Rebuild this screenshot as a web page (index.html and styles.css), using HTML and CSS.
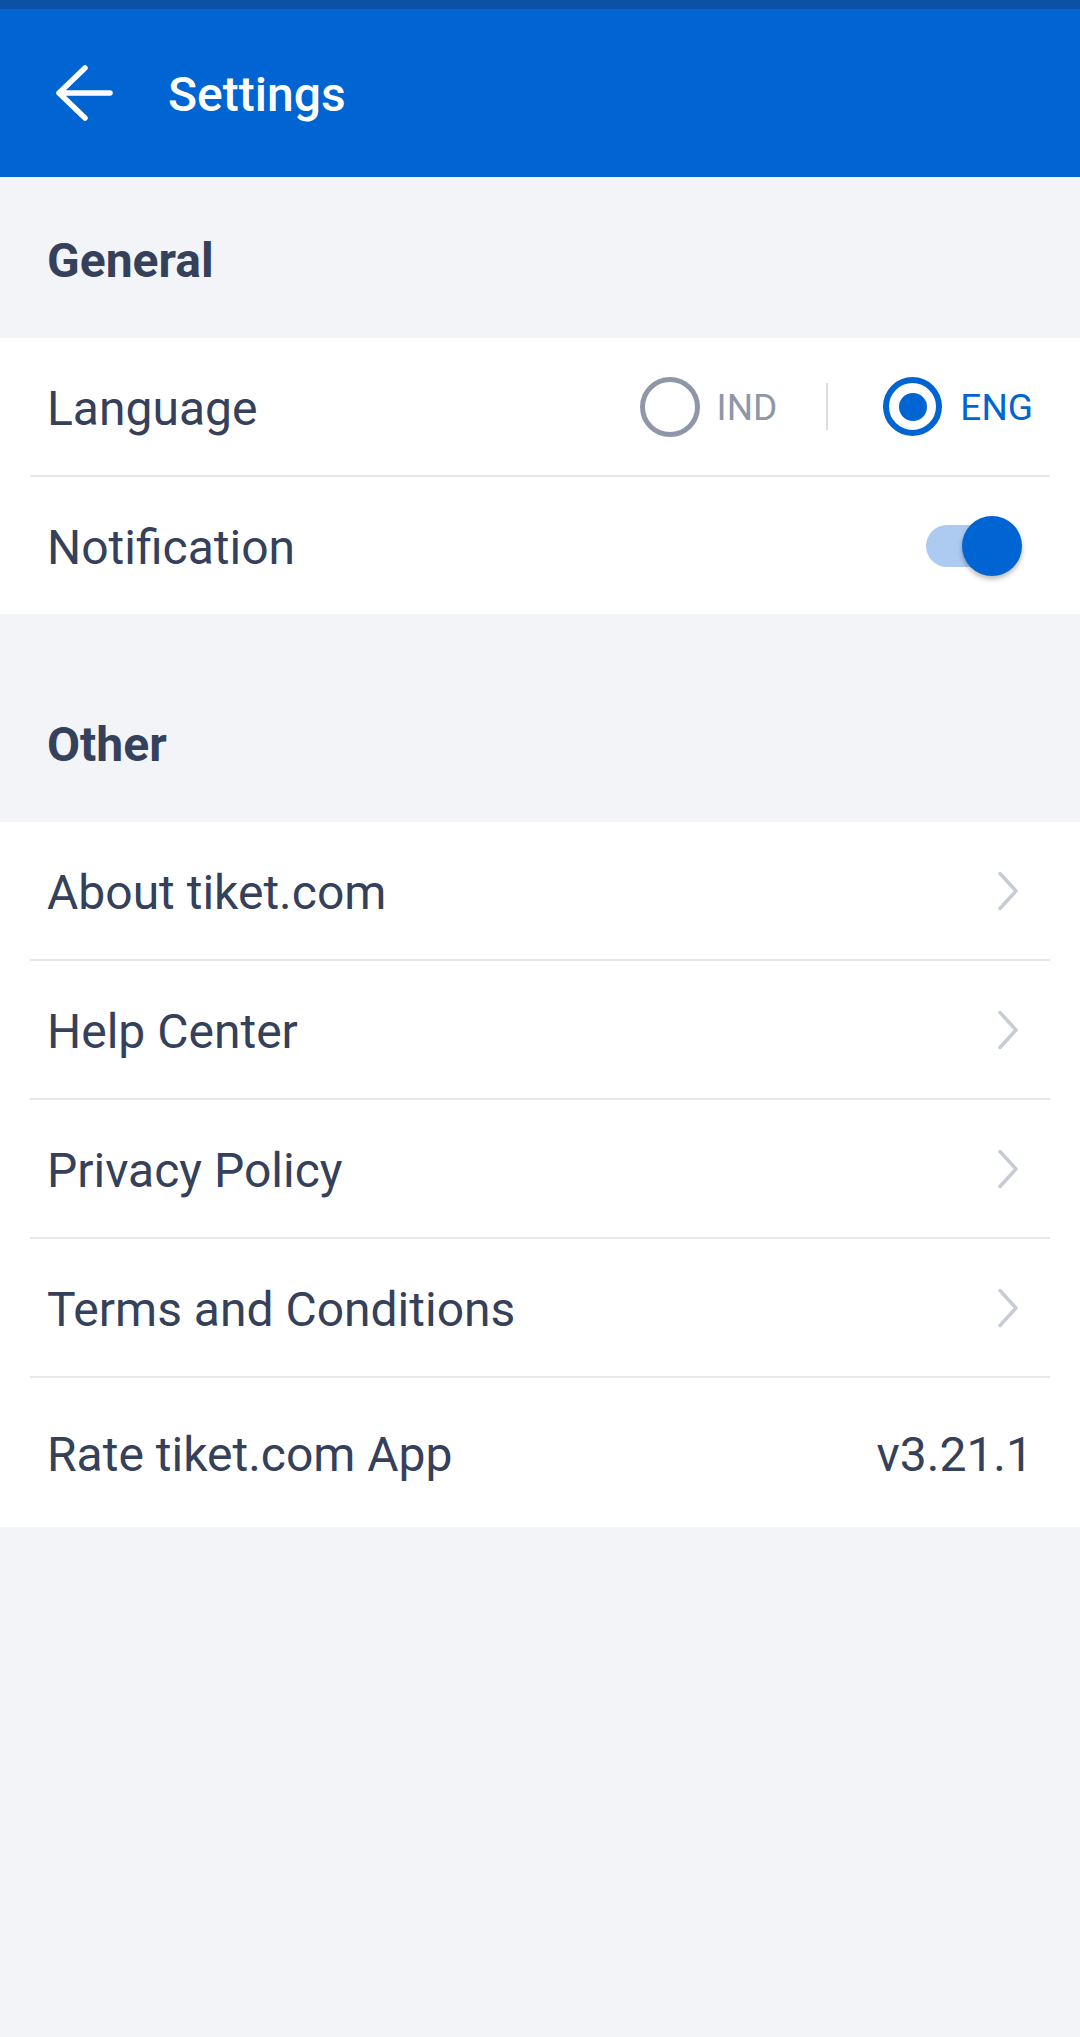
FILE: index.html
```html
<!DOCTYPE html>
<html lang="en">
<head>
<meta charset="utf-8">
<title>Settings</title>
<link rel="stylesheet" href="styles.css">
</head>
<body>
<div class="status"></div>
<header class="appbar">
  <svg class="back" width="60" height="60" viewBox="0 0 60 60" aria-hidden="true">
    <path d="M5 30 H56 M31 5 L5 30 L31 55" fill="none" stroke="#fff" stroke-width="5.5" stroke-linecap="round" stroke-linejoin="round"/>
  </svg>
  <h1 class="title">Settings</h1>
</header>

<section class="group">
  <div class="group-title">General</div>
  <div class="list">
    <div class="row">
      <span class="label">Language</span>
      <div class="lang">
        <span class="radio"></span>
        <span class="lang-text">IND</span>
        <span class="sep"></span>
        <span class="radio radio-on"><span class="dot"></span></span>
        <span class="lang-text lang-on">ENG</span>
      </div>
    </div>
    <div class="row">
      <span class="label">Notification</span>
      <div class="toggle">
        <span class="track"></span>
        <span class="knob"></span>
      </div>
    </div>
  </div>
</section>

<section class="group group-other">
  <div class="group-title">Other</div>
  <div class="list">
    <div class="row">
      <span class="label">About tiket.com</span>
      <svg class="chev" width="35" height="40" viewBox="0 0 35 40" aria-hidden="true"><path d="M2 2.5 L18 20 L2 37.5" fill="none" stroke="#c7cbd4" stroke-width="3.5" stroke-linecap="round" stroke-linejoin="round"/></svg>
    </div>
    <div class="row">
      <span class="label">Help Center</span>
      <svg class="chev" width="35" height="40" viewBox="0 0 35 40" aria-hidden="true"><path d="M2 2.5 L18 20 L2 37.5" fill="none" stroke="#c7cbd4" stroke-width="3.5" stroke-linecap="round" stroke-linejoin="round"/></svg>
    </div>
    <div class="row">
      <span class="label">Privacy Policy</span>
      <svg class="chev" width="35" height="40" viewBox="0 0 35 40" aria-hidden="true"><path d="M2 2.5 L18 20 L2 37.5" fill="none" stroke="#c7cbd4" stroke-width="3.5" stroke-linecap="round" stroke-linejoin="round"/></svg>
    </div>
    <div class="row">
      <span class="label">Terms and Conditions</span>
      <svg class="chev" width="35" height="40" viewBox="0 0 35 40" aria-hidden="true"><path d="M2 2.5 L18 20 L2 37.5" fill="none" stroke="#c7cbd4" stroke-width="3.5" stroke-linecap="round" stroke-linejoin="round"/></svg>
    </div>
    <div class="row row-tall">
      <span class="label">Rate tiket.com App</span>
      <span class="version">v3.21.1</span>
    </div>
  </div>
</section>
</body>
</html>
```

FILE: styles.css
```css
* { box-sizing: border-box; }

html, body {
  margin: 0;
  padding: 0;
}

body {
  width: 1080px;
  min-height: 2037px;
  background: #f3f4f8;
  font-family: Roboto, "Noto Sans", "Liberation Sans", sans-serif;
  color: #35405a;
}

.status {
  height: 9px;
  background: #0b52a4;
}

.appbar {
  height: 168px;
  background: #0064d2;
  display: flex;
  align-items: center;
  padding-left: 54px;
}

.back {
  display: block;
  flex: none;
}

.title {
  margin: 0 0 0 54px;
  padding-top: 3px;
  font-size: 48px;
  font-weight: 500;
  line-height: 56px;
  color: #ffffff;
}

.group-other {
  margin-top: 47px;
}

.group-title {
  height: 161px;
  display: flex;
  align-items: center;
  padding-left: 47px;
  padding-top: 6px;
  font-size: 48px;
  font-weight: 700;
  line-height: 56px;
  color: #35405a;
}

.list {
  background: #ffffff;
  padding: 0 30px;
}

.row {
  height: 139px;
  display: flex;
  align-items: center;
  justify-content: space-between;
  padding: 0 17px 0 17px;
  border-bottom: 2px solid #e6e8ec;
}

.row:last-child {
  height: 137px;
  border-bottom: none;
}

.row.row-tall {
  height: 149px;
}

.label,
.version {
  padding-top: 5px;
  font-size: 48px;
  line-height: 56px;
  font-weight: 400;
  color: #35405a;
}

.chev {
  display: block;
  flex: none;
}

/* language radios */
.lang {
  display: flex;
  align-items: center;
}

.radio {
  width: 60px;
  height: 60px;
  border-radius: 50%;
  border: 5px solid #8e96a8;
  display: flex;
  align-items: center;
  justify-content: center;
  flex: none;
}

.radio-on {
  width: 59px;
  height: 59px;
  border: 6px solid #0064d2;
}

.dot {
  width: 28px;
  height: 28px;
  border-radius: 50%;
  background: #0064d2;
}

.lang-text {
  margin-left: 17px;
  padding-top: 3px;
  font-size: 37px;
  line-height: 44px;
  color: #8e96a8;
}

.lang-on {
  margin-left: 18px;
  color: #0064d2;
}

.sep {
  width: 2px;
  height: 47px;
  background: #d9dce2;
  margin: 0 55px 0 49px;
}

/* toggle */
.toggle {
  position: relative;
  width: 96px;
  height: 60px;
  margin-right: 11px;
  flex: none;
}

.track {
  position: absolute;
  left: 0;
  top: 9px;
  width: 92px;
  height: 42px;
  border-radius: 21px;
  background: #adcaf0;
}

.knob {
  position: absolute;
  left: 36px;
  top: 0;
  width: 60px;
  height: 60px;
  border-radius: 50%;
  background: #0064d2;
  box-shadow: 0 3px 5px rgba(0, 0, 0, 0.28);
}
```
